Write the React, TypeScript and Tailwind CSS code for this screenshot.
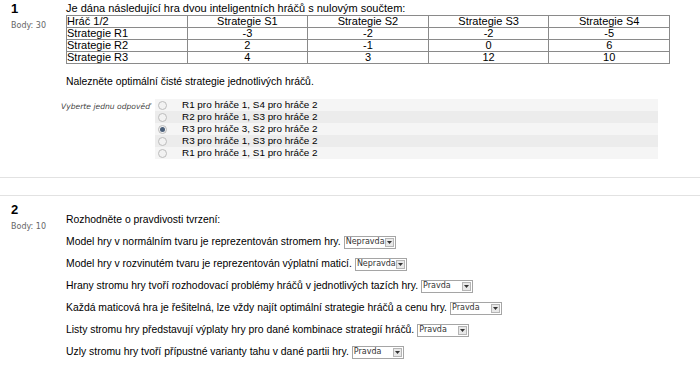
import React from "react";

const font = { fontFamily: '"Liberation Sans", Arial, sans-serif' };

const header = ["Hráč 1/2", "Strategie S1", "Strategie S2", "Strategie S3", "Strategie S4"];
const rows = [
  ["Strategie R1", "-3", "-2", "-2", "-5"],
  ["Strategie R2", "2", "-1", "0", "6"],
  ["Strategie R3", "4", "3", "12", "10"],
];

const options = [
  "R1 pro hráče 1, S4 pro hráče 2",
  "R2 pro hráče 1, S3 pro hráče 2",
  "R3 pro hráče 3, S2 pro hráče 2",
  "R3 pro hráče 1, S3 pro hráče 2",
  "R1 pro hráče 1, S1 pro hráče 2",
];

const statements = [
  { text: "Model hry v normálním tvaru je reprezentován stromem hry.", value: "Nepravda" },
  { text: "Model hry v rozvinutém tvaru je reprezentován výplatní maticí.", value: "Nepravda" },
  { text: "Hrany stromu hry tvoří rozhodovací problémy hráčů v jednotlivých tazích hry.", value: "Pravda" },
  { text: "Každá maticová hra je řešitelná, lze vždy najít optimální strategie hráčů a cenu hry.", value: "Pravda" },
  { text: "Listy stromu hry představují výplaty hry pro dané kombinace strategií hráčů.", value: "Pravda" },
  { text: "Uzly stromu hry tvoří přípustné varianty tahu v dané partii hry.", value: "Pravda" },
];

function Radio({ checked }: { checked?: boolean }) {
  return (
    <span className="flex h-[9px] w-[9px] items-center justify-center rounded-full border border-[#bcbcbc] bg-[#f2f2f2]">
      {checked && <span className="h-[5px] w-[5px] rounded-full bg-[#4a5f7a]" />}
    </span>
  );
}

function Select({ value }: { value: string }) {
  return (
    <span className="ml-[3px] inline-flex h-[13px] w-[52px] items-center border border-[#a5a5a5] bg-white">
      <span className="flex-1 pl-[1px] text-[8px] leading-none text-[#333]" style={{ fontFamily: '"DejaVu Sans", sans-serif' }}>
        {value}
      </span>
      <span className="mr-[1px] flex h-[9px] w-[9px] items-center justify-center border border-[#b5b5b5] bg-[#e8e8e8]">
        <svg width="5" height="3" viewBox="0 0 5 3">
          <path d="M0 0h5L2.5 3z" fill="#333" />
        </svg>
      </span>
    </span>
  );
}

export default function App() {
  return (
    <div className="h-[366px] w-[700px] overflow-hidden bg-white text-[11px] text-black" style={font}>
      {/* question 1 */}
      <div className="flex pt-[2px]">
        <div className="w-[66px] pl-[11px]">
          <div className="text-[13px] font-bold leading-[14px]">1</div>
          <div className="mt-[4px] text-[8px] text-[#666]" style={{ fontFamily: '"DejaVu Sans", sans-serif' }}>Body: 30</div>
        </div>
        <div className="flex-1">
          <div className="leading-[13px]">Je dána následující hra dvou inteligentních hráčů s nulovým součtem:</div>
          <table className="w-[604px] table-fixed border-collapse">
            <tbody>
              <tr>
                {header.map((h, i) => (
                  <td key={i} className={`h-[12px] border border-[#8a8a8a] p-0 leading-[11px] ${i === 0 ? "text-left" : "text-center"}`}>
                    {h}
                  </td>
                ))}
              </tr>
              {rows.map((r, ri) => (
                <tr key={ri}>
                  {r.map((c, i) => (
                    <td key={i} className={`h-[12px] border border-[#8a8a8a] p-0 leading-[11px] ${i === 0 ? "text-left" : "text-center"}`}>
                      {c}
                    </td>
                  ))}
                </tr>
              ))}
            </tbody>
          </table>
          <div className="mt-[12px] text-[10.4px] leading-[12px]">Nalezněte optimální čisté strategie jednotlivých hráčů.</div>
        </div>
      </div>

      <div className="mt-[11px] flex">
        <div className="w-[155px] pr-[5px] pt-[2px] text-right text-[7.6px] italic text-[#444]" style={{ fontFamily: '"DejaVu Sans", sans-serif' }}>
          Vyberte jednu odpověď
        </div>
        <div className="w-[503px]">
          {options.map((o, i) => (
            <div key={i} className={`flex h-[12px] items-center ${i % 2 === 0 ? "bg-[#f5f5f5]" : "bg-[#ececec]"}`}>
              <span className="ml-[3px] w-[24px]">
                <Radio checked={i === 2} />
              </span>
              <span className="text-[9.9px] leading-[12px]">{o}</span>
            </div>
          ))}
        </div>
      </div>

      <div className="mt-[18px] border-b border-[#e2e2e2]" />
      <div className="mt-[17px] border-b border-[#e2e2e2]" />

      {/* question 2 */}
      <div className="flex pt-[7px]">
        <div className="w-[66px] pl-[11px]">
          <div className="text-[13px] font-bold leading-[14px]">2</div>
          <div className="mt-[4px] text-[8px] text-[#666]" style={{ fontFamily: '"DejaVu Sans", sans-serif' }}>Body: 10</div>
        </div>
        <div className="flex-1 pt-[10px] text-[10.4px]">
          <div className="leading-[14px]">Rozhodněte o pravdivosti tvrzení:</div>
          {statements.map((s, i) => (
            <div key={i} className="mt-[8px] flex h-[14px] items-center">
              <span>{s.text}</span>
              <Select value={s.value} />
            </div>
          ))}
        </div>
      </div>
    </div>
  );
}
